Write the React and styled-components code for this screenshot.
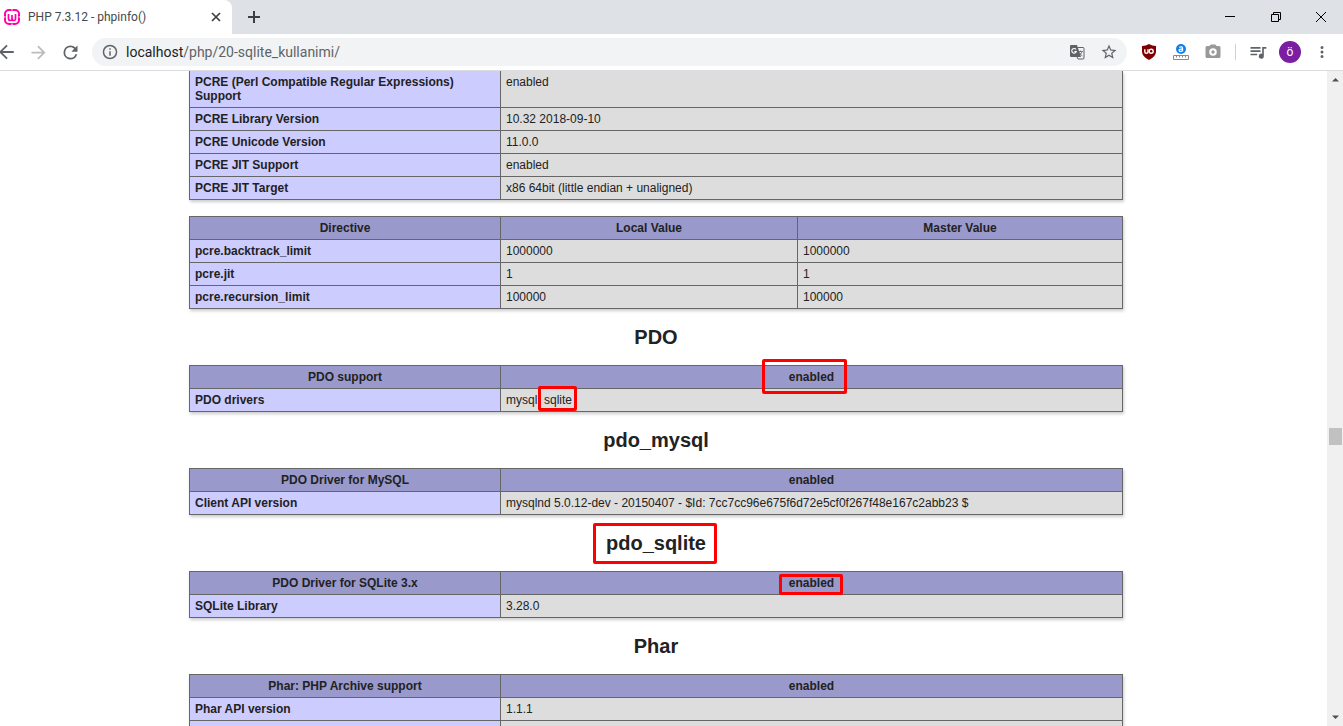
import React from 'react';
import styled, { createGlobalStyle } from 'styled-components';

const GlobalStyle = createGlobalStyle`
  * { box-sizing: border-box; }
  body { margin: 0; background: #fff; color: #222; font-family: "Liberation Sans", Arial, sans-serif; }
  button { font: inherit; border: 0; padding: 0; background: none; color: inherit; }
`;

const Browser = styled.div`
  display: flex;
  flex-direction: column;
  height: 100vh;
  overflow: hidden;
`;

const TabStrip = styled.header`
  display: flex;
  align-items: center;
  flex: none;
  height: 34px;
  background: #dee1e6;
  font-family: Roboto, sans-serif;
`;

const Tab = styled.div`
  display: flex;
  align-items: center;
  width: 232px;
  height: 34px;
  padding: 0 8px 0 4px;
  background: #fff;
  border-top-right-radius: 8px;
`;

const TabTitle = styled.span`
  flex: 1;
  margin-left: 8px;
  font-size: 12px;
  line-height: 16px;
  color: #45494d;
  white-space: nowrap;
`;

const IconButton = styled.button`
  display: flex;
  align-items: center;
  justify-content: center;
  flex: none;
  width: ${(p) => p.$width || 32}px;
  height: ${(p) => p.$height || 32}px;
  color: ${(p) => p.$color || '#5f6368'};
`;

const WindowControls = styled.div`
  display: flex;
  margin-left: auto;
`;

const Toolbar = styled.nav`
  display: flex;
  align-items: center;
  flex: none;
  height: 37px;
  padding-right: 5px;
  background: #fff;
  border-bottom: 1px solid #dadce0;
`;

const AddressBar = styled.div`
  display: flex;
  align-items: center;
  flex: 1;
  height: 28px;
  margin-left: 6px;
  padding: 0 2px 0 10px;
  border-radius: 14px;
  background: #f1f3f4;
`;

const Url = styled.div`
  flex: 1;
  margin-left: 8px;
  font-family: Roboto, sans-serif;
  font-size: 14px;
  line-height: 20px;
  color: #5f6368;
  white-space: nowrap;
`;

const Host = styled.span`
  color: #202124;
`;

const Extensions = styled.div`
  display: flex;
  align-items: center;
  margin-left: 6px;
`;

const Divider = styled.span`
  width: 1px;
  height: 16px;
  margin: 0 6px;
  background: #cfd1d4;
`;

const Avatar = styled.span`
  display: flex;
  align-items: center;
  justify-content: center;
  width: 22px;
  height: 22px;
  border-radius: 50%;
  background: #7b1fa2;
  color: #fff;
  font-family: Roboto, sans-serif;
  font-size: 12px;
`;

const Viewport = styled.div`
  display: flex;
  flex: 1;
  min-height: 0;
`;

const Page = styled.main`
  flex: 1;
  min-width: 0;
  padding-right: 15px;
  overflow: hidden;
`;

const ScrollTrack = styled.div`
  display: flex;
  flex-direction: column;
  align-items: center;
  flex: none;
  width: 16px;
  background: #f0f0f0;
`;

const ScrollSpace = styled.div`
  flex: ${(p) => p.$grow} 0 0;
`;

const ScrollThumb = styled.div`
  width: 13px;
  height: 17px;
  background: #c1c1c1;
`;

const InfoTable = styled.table`
  width: 934px;
  max-width: 100%;
  margin: ${(p) => (p.$continued ? 0 : 16)}px auto 16px;
  table-layout: fixed;
  border-collapse: collapse;
  box-shadow: 1px 2px 3px #ccc;
  font-size: 12px;
  line-height: 14px;
  text-align: left;
  tr:first-child > * {
    ${(p) => p.$continued && 'border-top: 0;'}
  }
`;

const Col = styled.col`
  width: ${(p) => p.$width};
`;

const cell = `
  padding: 4px 5px;
  border: 1px solid #666;
  vertical-align: baseline;
`;

const HeadCell = styled.th`
  ${cell}
  background: #99c;
  text-align: center;
`;

const NameCell = styled.th`
  ${cell}
  background: #ccf;
`;

const ValueCell = styled.td`
  ${cell}
  background: #ddd;
`;

const Heading = styled.h2`
  margin: 16px 0;
  font-size: 20px;
  line-height: 24px;
  text-align: center;
`;

const Marked = styled.span`
  position: relative;
  display: inline-block;
  &::after {
    content: "";
    position: absolute;
    inset: ${(p) => p.$inset};
    border: 3px solid #f00;
    border-radius: 2px;
  }
`;

function Table({ head, rows, continued }) {
  const columns = rows[0].length;
  return (
    <InfoTable $continued={continued}>
      <colgroup>
        <Col $width="311px" />
        {columns === 3 && <Col $width="297px" />}
        <Col $width="auto" />
      </colgroup>
      {head && (
        <thead>
          <tr>{head.map((h, i) => <HeadCell key={i} scope="col">{h}</HeadCell>)}</tr>
        </thead>
      )}
      <tbody>
        {rows.map(([name, ...values], i) => (
          <tr key={i}>
            <NameCell scope="row">{name}</NameCell>
            {values.map((v, j) => <ValueCell key={j}>{v}</ValueCell>)}
          </tr>
        ))}
      </tbody>
    </InfoTable>
  );
}

const Icon = ({ size = 16, box = 24, children, ...rest }) => (
  <svg width={size} height={size} viewBox={`0 0 ${box} ${box}`} fill="currentColor" aria-hidden="true" {...rest}>
    {children}
  </svg>
);

const WampIcon = () => (
  <Icon box={16} fill="none" stroke="#f0a">
    <rect x="1" y="1" width="14" height="14" rx="4" strokeWidth="2" />
    <path d="M4.500 5v4.500q0 2 1.800 2T8 9.500V6v3.500q0 2 1.800 2t1.700-2V5" strokeWidth="1.700" />
    <path d="M8 0v1.500M0 8h1.500M14.500 8H16M8 14.500V16" stroke="#fff" strokeWidth="1" />
  </Icon>
);

const TranslateIcon = () => (
  <Icon box={16}>
    <path d="M2 1h6l4 12H2a1 1 0 0 1-1-1V2a1 1 0 0 1 1-1z" />
    <path d="M8.500 3.500H14a1 1 0 0 1 1 1V14a1 1 0 0 1-1 1H9l-1-2" fill="none" stroke="currentColor" />
    <path d="M7 5.500A2.300 2.300 0 1 0 7.300 7.500H5.300" fill="none" stroke="#fff" strokeWidth="1.100" />
    <path d="M9.500 7.500h4.500M11.500 6.500v1M13 7.500q-.5 2.500-3 4M10.500 8.500q1 2.500 3 3.500" fill="none" stroke="currentColor" strokeWidth=".8" />
  </Icon>
);

const ShieldIcon = () => (
  <Icon box={16}>
    <path d="M8 0Q11 1.800 15 2v5.500Q15 12.500 8 16 1 12.500 1 7.500V2Q5 1.800 8 0z" fill="#800000" />
    <path d="M3.800 5.200v2.500q0 1.600 1.600 1.600T7 7.700V5.200" fill="none" stroke="#fff" strokeWidth="1.400" />
    <circle cx="10.200" cy="7.300" r="2" fill="none" stroke="#fff" strokeWidth="1.400" />
  </Icon>
);

const RulerIcon = () => (
  <Icon box={16}>
    <circle cx="8" cy="5" r="5" fill="#1080f0" />
    <path d="M6.300 3.300q3-1.200 3.200.8v3.400M9.500 5.200q-3.400-.2-3.400 1.100 0 1.200 1.500 1.200 1.200 0 1.900-.9" fill="none" stroke="#fff" strokeWidth="1.300" />
    <path d="M.5 11.500h15v4H.5zM3.500 11.500v2M6.500 11.500v2M9.500 11.500v2M12.500 11.500v2" fill="none" stroke="#8a8a8a" />
  </Icon>
);

export default function App() {
  return (
    <Browser>
      <GlobalStyle />
      <TabStrip>
        <Tab>
          <WampIcon />
          <TabTitle>PHP 7.3.12 - phpinfo()</TabTitle>
          <IconButton aria-label="Close tab" $width={16} $height={16} $color="#3c4043">
            <Icon size={10} box={10}><path d="M1 1l8 8M9 1L1 9" stroke="currentColor" strokeWidth="1.700" /></Icon>
          </IconButton>
        </Tab>
        <IconButton aria-label="New tab" $width={44} $color="#3c4043">
          <Icon size={12} box={12}><path d="M6 0v12M0 6h12" stroke="currentColor" strokeWidth="2" /></Icon>
        </IconButton>
        <WindowControls>
          <IconButton aria-label="Minimize" $width={46} $color="#000">
            <Icon size={10} box={10}><path d="M0 4h10v1H0z" /></Icon>
          </IconButton>
          <IconButton aria-label="Restore" $width={46} $color="#000">
            <Icon size={10} box={10}><path d="M.5 2.500h7v7h-7zM2.500 2.500v-2h7v7h-2" fill="none" stroke="currentColor" /></Icon>
          </IconButton>
          <IconButton aria-label="Close" $width={44} $color="#000">
            <Icon size={10} box={10}><path d="M0 0l10 10M10 0L0 10" stroke="currentColor" /></Icon>
          </IconButton>
        </WindowControls>
      </TabStrip>

      <Toolbar>
        <IconButton aria-label="Back" $width={22}>
          <Icon size={22} viewBox="5 0 24 24"><path d="M20 11H7.830l5.590-5.590L12 4l-8 8 8 8 1.410-1.410L7.830 13H20v-2z" /></Icon>
        </IconButton>
        <IconButton aria-label="Forward" $color="#babcbe">
          <Icon size={21}><path d="M12 4l-1.410 1.410L16.170 11H4v2h12.170l-5.580 5.590L12 20l8-8z" /></Icon>
        </IconButton>
        <IconButton aria-label="Reload">
          <Icon size={21}><path d="M17.650 6.350A7.960 7.960 0 0 0 12 4a8 8 0 1 0 7.730 10h-2.080A6 6 0 1 1 12 6c1.660 0 3.140.69 4.220 1.780L13 11h7V4z" /></Icon>
        </IconButton>
        <AddressBar>
          <Icon color="#5f6368" viewBox="1 1 22 22"><path d="M11 7h2v2h-2zm0 4h2v6h-2zm1-9a10 10 0 1 0 0 20 10 10 0 0 0 0-20zm0 18a8 8 0 1 1 0-16 8 8 0 0 1 0 16z" /></Icon>
          <Url><Host>localhost</Host>/php/20-sqlite_kullanimi/</Url>
          <IconButton aria-label="Translate this page"><TranslateIcon /></IconButton>
          <IconButton aria-label="Bookmark this page">
            <Icon size={18}><path d="M22 9.240l-7.190-.62L12 2 9.190 8.630 2 9.240l5.460 4.730L5.820 21 12 17.270 18.180 21l-1.630-7.030zM12 15.400l-3.760 2.270 1-4.280-3.320-2.880 4.380-.38L12 6.100l1.710 4.040 4.380.38-3.320 2.880 1 4.280z" /></Icon>
          </IconButton>
        </AddressBar>
        <Extensions>
          <IconButton aria-label="uBlock Origin"><ShieldIcon /></IconButton>
          <IconButton aria-label="Page ruler"><RulerIcon /></IconButton>
          <IconButton aria-label="Screenshot" $color="#999">
            <Icon size={18}><path d="M9 2L7.170 4H4a2 2 0 0 0-2 2v12c0 1.100.9 2 2 2h16a2 2 0 0 0 2-2V6a2 2 0 0 0-2-2h-3.170L15 2zm3 15a5 5 0 1 1 0-10 5 5 0 0 1 0 10z" /><circle cx="12" cy="12" r="2.200" /></Icon>
          </IconButton>
          <Divider />
          <IconButton aria-label="Media controls">
            <Icon size={20}><path d="M22 6h-5v8.180A3 3 0 1 0 19 17V8h3V6zM15 6H3v2h12V6zm0 4H3v2h12v-2zm-4 4H3v2h8v-2z" /></Icon>
          </IconButton>
          <IconButton aria-label="Profile"><Avatar>ö</Avatar></IconButton>
          <IconButton aria-label="Menu">
            <Icon size={18}><path d="M12 8a2 2 0 1 0 0-4 2 2 0 0 0 0 4zm0 2a2 2 0 1 0 0 4 2 2 0 0 0 0-4zm0 6a2 2 0 1 0 0 4 2 2 0 0 0 0-4z" /></Icon>
          </IconButton>
        </Extensions>
      </Toolbar>

      <Viewport>
        <Page>
          <Table
            continued
            rows={[
              ['PCRE (Perl Compatible Regular Expressions) Support', 'enabled'],
              ['PCRE Library Version', '10.32 2018-09-10'],
              ['PCRE Unicode Version', '11.0.0'],
              ['PCRE JIT Support', 'enabled'],
              ['PCRE JIT Target', 'x86 64bit (little endian + unaligned)'],
            ]}
          />
          <Table
            head={['Directive', 'Local Value', 'Master Value']}
            rows={[
              ['pcre.backtrack_limit', '1000000', '1000000'],
              ['pcre.jit', '1', '1'],
              ['pcre.recursion_limit', '100000', '100000'],
            ]}
          />
          <Heading>PDO</Heading>
          <Table
            head={['PDO support', <Marked $inset="-11px -13px -10px -27px">enabled</Marked>]}
            rows={[['PDO drivers', <>mysql, <Marked $inset="-7px -5px -4px -6px">sqlite</Marked></>]]}
          />
          <Heading>pdo_mysql</Heading>
          <Table
            head={['PDO Driver for MySQL', 'enabled']}
            rows={[['Client API version', 'mysqlnd 5.0.12-dev - 20150407 - $Id: 7cc7cc96e675f6d72e5cf0f267f48e167c2abb23 $']]}
          />
          <Heading><Marked $inset="-8px -11px -9px -13px">pdo_sqlite</Marked></Heading>
          <Table
            head={['PDO Driver for SQLite 3.x', <Marked $inset="-2px -9px -5px -10px">enabled</Marked>]}
            rows={[['SQLite Library', '3.28.0']]}
          />
          <Heading>Phar</Heading>
          <Table
            head={['Phar: PHP Archive support', 'enabled']}
            rows={[['Phar API version', '1.1.1'], ['', '']]}
          />
        </Page>
        <ScrollTrack>
          <IconButton aria-label="Scroll up" $width={16} $height={17} $color="#505050">
            <Icon size={7} box={7}><path d="M0 5.500L3.500 2 7 5.500z" /></Icon>
          </IconButton>
          <ScrollSpace $grow={340} />
          <ScrollThumb />
          <ScrollSpace $grow={264} />
          <IconButton aria-label="Scroll down" $width={16} $height={17} $color="#505050">
            <Icon size={7} box={7}><path d="M0 1.500L3.500 5 7 1.500z" /></Icon>
          </IconButton>
        </ScrollTrack>
      </Viewport>
    </Browser>
  );
}
